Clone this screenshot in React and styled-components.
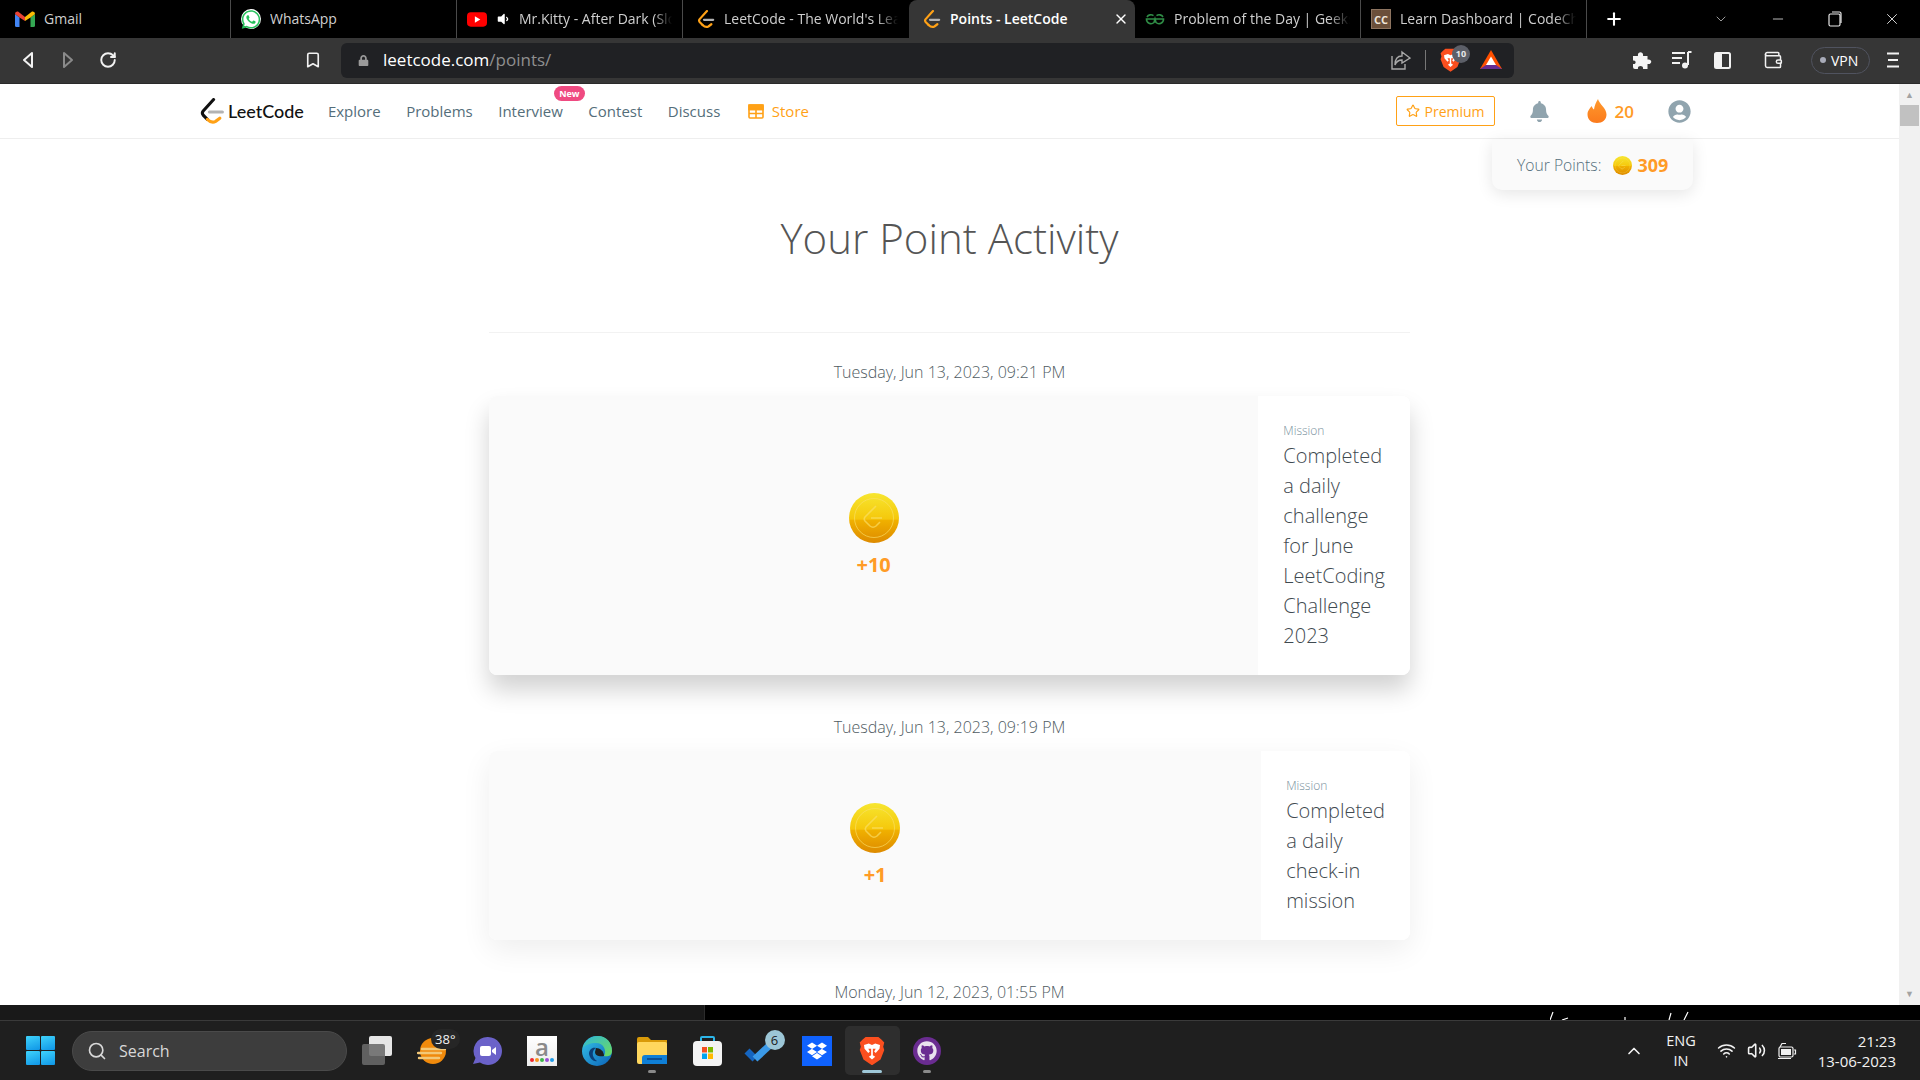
import styled, { createGlobalStyle } from "styled-components";
import {
  Bookmark,
  ChevronDown,
  ChevronUp,
  Minus,
  Plus,
  RotateCw,
  Search,
  Star,
  Volume2,
  Wallet,
  Wifi,
  X,
} from "lucide-react";
import {
  FaBell,
  FaDropbox,
  FaGithub,
  FaLock,
  FaUserCircle,
  FaVolumeDown,
  FaWhatsapp,
} from "react-icons/fa";

const GlobalStyle = createGlobalStyle`
  html, body {
    margin: 0;
    padding: 0;
    background: #000;
    overflow: hidden;
  }
  * {
    box-sizing: border-box;
  }
  body {
    font-family: "Open Sans", "Liberation Sans", sans-serif;
  }
`;

const Screen = styled.div`
  width: 1920px;
  height: 1080px;
  display: flex;
  flex-direction: column;
  overflow: hidden;
`;

/* browser chrome */
const TabStrip = styled.div`
  height: 38px;
  flex: none;
  display: flex;
  padding-left: 5px;
  background: #000;
`;

const Tab = styled.div`
  position: relative;
  width: 226px;
  flex: none;
  display: flex;
  align-items: center;
  gap: 9px;
  padding: 0 ${(p) => (p.$active ? 5 : 10)}px 0 ${(p) => (p.$inset ? 12 : 10)}px;
  background: ${(p) => (p.$active ? "#363636" : "transparent")};
  border-radius: ${(p) => (p.$active ? "8px 8px 0 0" : "0")};
  border-right: 1px solid ${(p) => (p.$active || p.$noLine ? "transparent" : "#4a4a4a")};
  color: ${(p) => (p.$active ? "#fff" : "#cfcfcf")};
  font-size: 14px;
  font-weight: ${(p) => (p.$active ? 600 : 400)};
`;

const TabTitle = styled.span`
  flex: 1;
  min-width: 0;
  margin-bottom: 2px;
  overflow: hidden;
  white-space: nowrap;
  mask-image: ${(p) =>
    p.$fade ? "linear-gradient(to right, #000 88%, transparent)" : "none"};
`;

const FavBox = styled.span`
  width: ${(p) => (p.$narrow ? 14 : 20)}px;
  height: 20px;
  flex: none;
  display: flex;
  align-items: center;
  justify-content: center;
`;

const WhatsBack = styled(FavBox)`
  background: #fff;
  border-radius: 50%;
  color: #25c05a;
  font-size: 21px;
`;

const CodeChefMark = styled(FavBox)`
  background: #6b4f3a;
  color: #f0e6da;
  font-size: 11px;
  font-weight: 700;
  border: 1px solid #8d7460;
`;

const NewTabButton = styled.div`
  width: 54px;
  flex: none;
  display: flex;
  align-items: center;
  justify-content: center;
  color: #fff;
`;

const WindowControls = styled.div`
  margin-left: auto;
  display: flex;
`;

const WindowButton = styled.div`
  width: 57px;
  display: flex;
  align-items: center;
  justify-content: center;
  color: #e8e8e8;
`;

const Toolbar = styled.div`
  height: 46px;
  flex: none;
  display: flex;
  align-items: center;
  padding: 0 0 1px 8px;
  background: #363636;
  border-bottom: 1px solid #2a2a2a;
`;

const ToolButton = styled.div`
  width: 40px;
  height: 34px;
  flex: none;
  display: flex;
  align-items: center;
  justify-content: center;
  margin-left: ${(p) => p.$gap || 0}px;
  color: ${(p) => (p.$dim ? "#8a8a8a" : "#f2f2f2")};
`;

const AddressBar = styled.div`
  width: 1173px;
  height: 35px;
  flex: none;
  margin-left: 8px;
  display: flex;
  align-items: center;
  padding: 0 11px 0 17px;
  background: #202124;
  border-radius: 6px;
  color: #9a9a9a;
  font-size: 17px;
`;

const Url = styled.span`
  margin: 0 0 1px 14px;
  color: #8f8f8f;
  & b {
    color: #fff;
    font-weight: 400;
  }
`;

const AddressEnd = styled.div`
  margin-left: auto;
  display: flex;
  align-items: center;
`;

const BarDivider = styled.span`
  width: 1px;
  height: 20px;
  margin: 0 14px;
  background: #777;
`;

const ShieldWrap = styled.span`
  position: relative;
  display: flex;
  margin-right: 18px;
`;

const ShieldCount = styled.span`
  position: absolute;
  top: -3px;
  right: -9px;
  width: 18px;
  height: 18px;
  border-radius: 50%;
  background: #5c5f68;
  color: #e8e8e8;
  font-size: 9px;
  font-weight: 700;
  display: flex;
  align-items: center;
  justify-content: center;
`;

const VpnPill = styled.div`
  width: 59px;
  height: 27px;
  flex: none;
  margin-left: 18px;
  display: flex;
  align-items: center;
  gap: 5px;
  padding-left: 8px;
  border: 1.5px solid #50535f;
  border-radius: 14px;
  color: #fff;
  font-size: 14px;
`;

const VpnDot = styled.span`
  width: 6px;
  height: 6px;
  border-radius: 50%;
  background: #a8abb8;
`;

/* page */
const PageRow = styled.div`
  flex: 1;
  min-height: 0;
  display: flex;
  background: #fff;
`;

const Scroller = styled.div`
  flex: 1;
  min-width: 0;
  position: relative;
  overflow: hidden;
`;

const Nav = styled.nav`
  height: 55px;
  display: flex;
  align-items: center;
  padding: 0 208px 0 198px;
  border-bottom: 1px solid #eeeeee;
`;

const LogoLink = styled.div`
  display: flex;
  align-items: center;
  gap: 3px;
  margin-right: 24px;
  color: #111;
  font-family: Lato, "Open Sans", sans-serif;
  font-size: 18px;
  font-weight: 500;
`;

const NavLinks = styled.div`
  display: flex;
  align-items: center;
  gap: 25.5px;
`;

const NavLink = styled.div`
  position: relative;
  display: flex;
  align-items: center;
  gap: 8px;
  margin-left: ${(p) => (p.$store ? 2 : 0)}px;
  font-size: 15px;
  color: ${(p) => (p.$store ? "#ffa116" : "#546e7a")};
`;

const NewBadge = styled.span`
  position: absolute;
  top: -15px;
  right: -22px;
  width: 31px;
  height: 15px;
  border-radius: 8px;
  background: #ef4a81;
  color: #fff;
  font-size: 9px;
  font-weight: 700;
  display: flex;
  align-items: center;
  justify-content: center;
`;

const NavRight = styled.div`
  margin-left: auto;
  display: flex;
  align-items: center;
`;

const PremiumButton = styled.div`
  width: 99px;
  height: 30px;
  display: flex;
  align-items: center;
  justify-content: center;
  gap: 5px;
  border: 1px solid #ffa116;
  border-radius: 2px;
  color: #ffa116;
  font-size: 14px;
`;

const NavBell = styled.div`
  display: flex;
  margin-left: 34px;
  color: #90a4ae;
  font-size: 21px;
`;

const Streak = styled.div`
  display: flex;
  align-items: center;
  gap: 8px;
  margin-left: 37px;
  color: #ff9b26;
  font-size: 17px;
  font-weight: 600;
`;

const Avatar = styled.div`
  display: flex;
  margin-left: 34px;
  color: #90a4ae;
  font-size: 23px;
`;

const PointsPopover = styled.div`
  position: absolute;
  top: 55px;
  right: 206px;
  width: 201px;
  height: 51px;
  display: flex;
  align-items: center;
  padding: 1px 0 0 25px;
  background: #fafafa;
  border-radius: 0 0 10px 10px;
  box-shadow: 0 4px 16px rgba(0, 0, 0, 0.1);
  color: #546e7a;
  font-size: 15.7px;
  font-weight: 300;
`;

const PointsValue = styled.span`
  margin-left: 5px;
  color: #ff9b26;
  font-size: 18px;
  font-weight: 700;
`;

const PopCoin = styled.span`
  display: flex;
  margin-left: 12px;
`;

const Main = styled.main`
  width: 921px;
  margin: 0 auto;
`;

const PageTitle = styled.h1`
  margin: 74px 0 69px;
  text-align: center;
  color: #555;
  font-size: 42px;
  line-height: 50px;
  font-weight: 300;
`;

const Rule = styled.div`
  height: 1px;
  background: #f2f2f2;
  margin-bottom: 27px;
`;

const ActivityDate = styled.div`
  height: 24px;
  margin-bottom: 12px;
  text-align: center;
  color: #4f5b62;
  font-size: 16px;
  line-height: 24px;
  font-weight: 300;
`;

const ActivityCard = styled.section`
  display: flex;
  margin-bottom: 40px;
  border-radius: 8px;
  background: #fff;
  box-shadow: ${(p) =>
    p.$raised
      ? "0 15px 25px rgba(0, 0, 0, 0.18)"
      : "0 10px 30px rgba(0, 0, 0, 0.07)"};
`;

const RewardSide = styled.div`
  flex: 1;
  display: flex;
  flex-direction: column;
  align-items: center;
  justify-content: center;
  gap: 8px;
  background: #fafafa;
  border-radius: 8px 0 0 8px;
`;

const RewardAmount = styled.div`
  color: #ff9b26;
  font-size: 20px;
  line-height: 27px;
  font-weight: 700;
`;

const MissionSide = styled.div`
  flex: none;
  width: min-content;
  padding: 25px 25px 24px;
  background: #fff;
  border-radius: 0 8px 8px 0;
`;

const MissionLabel = styled.div`
  color: #78909c;
  font-size: 12px;
  line-height: 20px;
  font-weight: 300;
`;

const MissionText = styled.div`
  color: #3f4a50;
  font-size: 20px;
  line-height: 30px;
  font-weight: 300;
`;

const Scrollbar = styled.div`
  width: 21px;
  flex: none;
  display: flex;
  flex-direction: column;
  align-items: center;
  padding: 0 0 1px;
  background: #f1f1f1;
  color: #a3a3a3;
  font-size: 9px;
`;

const ScrollArrow = styled.div`
  height: 21px;
  flex: none;
  display: flex;
  align-items: center;
  justify-content: center;
  margin-top: ${(p) => (p.$end ? "auto" : "0")};
`;

const ScrollThumb = styled.div`
  width: 19px;
  height: 21px;
  background: #c1c1c1;
`;

/* what shows of the window behind, above the taskbar */
const BehindStrip = styled.div`
  height: 15px;
  flex: none;
  display: flex;
  background: #000;
`;

const BehindPanel = styled.div`
  width: 705px;
  background: #191919;
  border-right: 1px solid #2c2c2c;
`;

const BehindMarks = styled.div`
  margin-left: 845px;
  display: flex;
`;

const Taskbar = styled.footer`
  height: 60px;
  flex: none;
  display: flex;
  align-items: center;
  padding-left: 26px;
  background: #1f1f1f;
  border-top: 1px solid #3a3a3a;
`;

const StartLogo = styled.div`
  width: 29px;
  height: 29px;
  flex: none;
  display: grid;
  grid-template-columns: 1fr 1fr;
  gap: 1.5px;
`;

const StartPane = styled.span`
  background: linear-gradient(160deg, #3fd3fb, #0f95e6);
  border-radius: 1px;
`;

const SearchPill = styled.div`
  width: 275px;
  height: 40px;
  flex: none;
  margin: 0 2.5px 0 17px;
  display: flex;
  align-items: center;
  gap: 12px;
  padding-left: 14px;
  background: #3d3d3d;
  border: 1px solid #4a4a4a;
  border-radius: 20px;
  color: #d8d8d8;
  font-size: 16px;
`;

const TaskItem = styled.div`
  position: relative;
  width: 55px;
  height: 49px;
  flex: none;
  display: flex;
  align-items: center;
  justify-content: center;
  background: ${(p) => (p.$active ? "#2e2e2e" : "transparent")};
  border-radius: 5px;
`;

const RunDot = styled.span`
  position: absolute;
  bottom: 2px;
  left: 50%;
  transform: translateX(-50%);
  width: ${(p) => (p.$wide ? "20px" : "8px")};
  height: 3px;
  border-radius: 2px;
  background: ${(p) => (p.$wide ? "#9fc8d8" : "#8a8a8a")};
`;

const TempBadge = styled.span`
  position: absolute;
  top: 3px;
  right: 0;
  height: 20px;
  padding: 0 4px;
  border-radius: 10px;
  background: #262626;
  color: #f2f2f2;
  font-size: 13px;
  line-height: 20px;
`;

const TodoBadge = styled.span`
  position: absolute;
  top: 4px;
  right: 5px;
  width: 20px;
  height: 20px;
  border-radius: 50%;
  background: #9cc6d6;
  color: #1a1a1a;
  font-size: 13px;
  display: flex;
  align-items: center;
  justify-content: center;
`;

const AmazonTile = styled.div`
  width: 30px;
  height: 30px;
  display: flex;
  flex-direction: column;
  align-items: center;
  background: linear-gradient(#fff, #ececec);
  color: #8a8a8a;
  font-size: 24px;
  line-height: 21px;
  font-weight: 600;
`;

const AmazonDots = styled.div`
  display: flex;
  gap: 1px;
  margin-top: 1px;
`;

const AmazonDot = styled.span`
  width: 4px;
  height: 4px;
  border-radius: 50%;
  background: ${(p) => p.$color};
`;

const DropboxTile = styled.div`
  width: 30px;
  height: 30px;
  display: flex;
  align-items: center;
  justify-content: center;
  background: #0f62fe;
  color: #fff;
  font-size: 20px;
`;

const GithubBadge = styled.div`
  width: 28px;
  height: 28px;
  display: flex;
  align-items: center;
  justify-content: center;
  border-radius: 50%;
  background: #6a2c91;
  color: #e9e2ee;
  font-size: 20px;
`;

const Tray = styled.div`
  margin-left: auto;
  display: flex;
  align-items: center;
  padding-right: 24px;
  color: #f2f2f2;
  font-size: 14px;
`;

const TrayStack = styled.div`
  display: flex;
  flex-direction: column;
  align-items: ${(p) => (p.$end ? "flex-end" : "center")};
  margin: 0 ${(p) => p.$right || 0}px 0 ${(p) => p.$left || 0}px;
  font-size: ${(p) => (p.$end ? 15 : 14.5)}px;
  line-height: 20px;
`;

const TrayIcon = styled.div`
  width: 30px;
  display: flex;
  justify-content: center;
`;

const Gradients = () => (
  <svg width="0" height="0" style={{ position: "absolute" }}>
    <defs>
      <linearGradient id="coinFace" x1="0" y1="0" x2="0" y2="1">
        <stop offset="0" stopColor="#f7e62f" />
        <stop offset="0.52" stopColor="#f5c80c" />
        <stop offset="0.55" stopColor="#f0b000" />
        <stop offset="1" stopColor="#dd8a00" />
      </linearGradient>
      <linearGradient id="flame" x1="0" y1="0" x2="0" y2="1">
        <stop offset="0" stopColor="#ff9a2e" />
        <stop offset="1" stopColor="#fb7a1c" />
      </linearGradient>
      <linearGradient id="edgeBlue" x1="0" y1="0" x2="1" y2="1">
        <stop offset="0" stopColor="#36c5e8" />
        <stop offset="1" stopColor="#0b62b8" />
      </linearGradient>
      <linearGradient id="edgeGreen" x1="0" y1="0" x2="1" y2="1">
        <stop offset="0" stopColor="#2fb8d8" />
        <stop offset="1" stopColor="#6fdc5c" />
      </linearGradient>
    </defs>
  </svg>
);

const Coin = ({ size = 50 }) => (
  <svg width={size} height={size} viewBox="0 0 50 50">
    <circle cx="25" cy="25" r="25" fill="url(#coinFace)" />
    <circle cx="25" cy="25" r="19.5" fill="none" stroke="#fbe06a" strokeOpacity=".7" strokeWidth=".9" />
    <path
      d="M27 13 L16 24 Q14.5 26 16 28 L21 33 Q24 35.5 27 33 L31 29"
      fill="none"
      stroke="#fbe06a"
      strokeOpacity=".65"
      strokeWidth="1.6"
    />
    <path d="M22 25 H33" stroke="#fbe06a" strokeOpacity=".65" strokeWidth="1.6" />
  </svg>
);

const LeetLogo = ({ size = 24, ink = "#111" }) => (
  <svg width={size} height={size} viewBox="0 0 24 26" fill="none" strokeWidth="3" strokeLinecap="round">
    <path d="M14 1.5 L4 12.5 Q2.4 14.5 4 16.5 L8 20.5" stroke={ink} />
    <path d="M8 20.5 Q12 24.5 16 22.5 L20 19.5" stroke="#ffa116" />
    <path d="M10 13.5 H22.5" stroke="#b3b3b3" />
  </svg>
);

const GmailIcon = () => (
  <svg width="20" height="16" viewBox="0 0 20 16">
    <path d="M0 3 V14.5 Q0 16 1.5 16 H4.5 V6.5 Z" fill="#4285f4" />
    <path d="M15.5 6.5 V16 H18.5 Q20 16 20 14.5 V3 Z" fill="#34a853" />
    <path d="M0 3 Q0 0 3 .6 L10 6 L10 10 L4.5 6.5 L0 3Z" fill="#ea4335" />
    <path d="M20 3 Q20 0 17 .6 L10 6 L10 10 L15.5 6.5 Z" fill="#fbbc04" />
  </svg>
);

const YoutubeIcon = () => (
  <svg width="21" height="15" viewBox="0 0 21 15">
    <rect width="21" height="15" rx="4" fill="#ff0000" />
    <path d="M8.3 4 L14 7.5 L8.3 11 Z" fill="#fff" />
  </svg>
);

const GfgIcon = () => (
  <svg width="20" height="12" viewBox="0 0 20 12" fill="none" stroke="#2f8d46" strokeWidth="1.6">
    <path d="M10 6 H1.5 A4.5 4.5 0 0 0 9 9.5 L10 6 L11 9.5 A4.5 4.5 0 0 0 18.5 6 H10" />
    <path d="M8.5 2.6 A4.5 4.5 0 0 0 2 4" />
    <path d="M11.5 2.6 A4.5 4.5 0 0 1 18 4" />
  </svg>
);

const BackArrow = ({ flip }) => (
  <svg width="12" height="18" viewBox="0 0 12 18" fill="none" stroke="currentColor" strokeWidth="2" strokeLinejoin="round">
    <path d={flip ? "M2 2 L10 9 L2 16 Z" : "M10 2 L2 9 L10 16 Z"} />
  </svg>
);

const ShareIcon = () => (
  <svg width="20" height="20" viewBox="0 0 20 20" fill="none" stroke="#a9a9a9" strokeWidth="1.4">
    <path d="M1 6 V19 H14 V14" />
    <path d="M11 2 L19 8 L11 13 V10 Q6 10 4 15 Q4 6 11 6 Z" />
  </svg>
);

const BraveIcon = ({ size = 22 }) => (
  <svg width={size} height={size * 1.15} viewBox="0 0 24 28">
    <path d="M6 1 H18 L21 3.5 L23.5 6 L22.5 10 L23.5 13 L20 22 L12 27.5 L4 22 L.5 13 L1.5 10 L.5 6 L3 3.5 Z" fill="#fb4f1f" />
    <path
      d="M4.5 8.5 L9 7 L12 8.5 L15 7 L19.5 8.5 L19 12 L15.5 16 L14 14.5 L15.5 12 L12.8 12 L12.8 18 L15 19.5 L12 22 L9 19.5 L11.2 18 L11.2 12 L8.5 12 L10 14.5 L8.5 16 L5 12 Z"
      fill="#fff"
    />
  </svg>
);

const BatIcon = () => (
  <svg width="24" height="21" viewBox="0 0 24 21">
    <path d="M12 1 L23 20 H1 Z" fill="#ff5000" />
    <path d="M12 7.5 L17 16 H7 Z" fill="#fff" />
    <path d="M1 20 L7 16 H17 L23 20 Z" fill="#662d91" />
  </svg>
);

const PuzzleIcon = () => (
  <svg width="20" height="20" viewBox="0 0 20 20" fill="#f5f5f5">
    <path d="M1 6 H6 C5 1 12 1 11 6 H15.5 V9.5 C20.5 8.5 20.5 15 15.5 14 V19 H11 C12 15 5 15 6 19 H3 Q1 19 1 17 V14 C4.5 15 4.5 9.5 1 10.5 Z" />
  </svg>
);

const PlaylistIcon = () => (
  <svg width="20" height="18" viewBox="0 0 20 18" fill="#f2f2f2" stroke="#f2f2f2">
    <path d="M0 2 H13 M0 7 H10 M0 12 H8" strokeWidth="2" />
    <path d="M16 1 H19.5 M16 1 V14" strokeWidth="2" fill="none" />
    <circle cx="13" cy="14.5" r="3" stroke="none" />
  </svg>
);

const SidebarIcon = () => (
  <svg width="17" height="17" viewBox="0 0 17 17">
    <rect x="1" y="1" width="15" height="15" rx="1.5" fill="none" stroke="#f2f2f2" strokeWidth="2" />
    <rect x="1" y="1" width="7" height="15" fill="#f2f2f2" />
  </svg>
);

const MenuLines = () => (
  <svg width="14" height="16" viewBox="0 0 14 16" stroke="#f2f2f2" strokeWidth="2">
    <path d="M1 1.5 H13 M2 8 H12 M1 14.5 H13" />
  </svg>
);

const RestoreIcon = () => (
  <svg width="14" height="16" viewBox="0 0 14 16" fill="none" stroke="#e8e8e8" strokeWidth="1.2">
    <rect x="1" y="3" width="11" height="12" rx="1.5" />
    <path d="M4 1 H11.5 Q13 1 13 2.5 V12" />
  </svg>
);

const StoreIcon = () => (
  <svg width="16" height="15" viewBox="0 0 16 15" fill="none" stroke="#ffa116" strokeWidth="1.6">
    <rect x="1" y="1" width="14" height="13" rx="1" />
    <path d="M1 5.5 H15 M1 9.5 H15 M8 5.5 V14" />
    <path d="M1 1 H15 V5.5 H1 Z" fill="#ffa116" />
  </svg>
);

const FlameIcon = () => (
  <svg width="20" height="24" viewBox="0 0 20 24">
    <path
      d="M11 0 C12 5 19.5 9 19.5 15.5 C19.5 20.5 15.5 24 10 24 C4.5 24 .5 20.5 .5 15.5 C.5 11.5 3 9.5 4.5 7 C5.5 9 6 10 7 10.5 C7.5 7 9 3 11 0 Z"
      fill="url(#flame)"
    />
  </svg>
);

const TaskViewIcon = () => (
  <svg width="30" height="29" viewBox="0 0 30 29">
    <rect x="7" y="0" width="23" height="20" rx="2" fill="#e6e6e6" />
    <rect x="0" y="8" width="23" height="21" rx="2" fill="#6a6a6a" fillOpacity=".88" />
  </svg>
);

const WeatherIcon = () => (
  <svg width="30" height="28" viewBox="0 0 30 28">
    <circle cx="16" cy="14" r="13" fill="#f08a0c" />
    <path d="M5 12 H28 M1 16 H24 M2 21 H22" stroke="#f3c877" strokeWidth="2.4" strokeLinecap="round" />
  </svg>
);

const ChatIcon = () => (
  <svg width="30" height="30" viewBox="0 0 30 30">
    <path d="M16 1 A14 14 0 1 1 8 26.5 L1 28 L3.5 22 A14 14 0 0 1 16 1 Z" fill="#6b62c9" />
    <rect x="8" y="10" width="11" height="10" rx="2" fill="#fff" />
    <path d="M20 14 L24 11 V19 L20 16 Z" fill="#fff" />
  </svg>
);

const EdgeIcon = () => (
  <svg width="30" height="30" viewBox="0 0 30 30">
    <circle cx="15" cy="15" r="15" fill="url(#edgeBlue)" />
    <path d="M1 12 C3 3 11 0 16 0 C25 0 30 7 30 15 C30 20 25 21 22 20 C25 15 22 7 14 7 C8 7 3 9 1 12 Z" fill="url(#edgeGreen)" />
    <path d="M14 12 C10 14 9 21 15 25 C12 26 8 23 7 18 C7 14 10 11 14 12 Z" fill="#0a3f7a" />
    <path d="M14 12 C18 12 22 15 22 20 C18 21 13 20 13 16 Z" fill="#1f1f1f" />
  </svg>
);

const FolderIcon = () => (
  <svg width="30" height="27" viewBox="0 0 30 27">
    <path d="M0 2 Q0 0 2 0 H11 L14 3 H30 V9 H0 Z" fill="#d99a09" />
    <rect y="5" width="30" height="22" rx="2" fill="#ffd75e" />
    <path d="M5 27 V21 Q5 18 8 18 H30 V27 Z" fill="#0f7fd6" />
    <path d="M10 22 H25" stroke="#0a4f94" strokeWidth="2" />
  </svg>
);

const MsStoreIcon = () => (
  <svg width="29" height="30" viewBox="0 0 29 30">
    <path d="M8 6 V2 Q8 1 9 1 H20 Q21 1 21 2 V6" fill="none" stroke="#2cb5e8" strokeWidth="2" />
    <rect y="5" width="29" height="25" rx="4" fill="#f3f3f3" />
    <rect x="9" y="11" width="5" height="5.5" fill="#f25022" />
    <rect x="15" y="11" width="5" height="5.5" fill="#7fba00" />
    <rect x="9" y="17.5" width="5" height="5.5" fill="#00a4ef" />
    <rect x="15" y="17.5" width="5" height="5.5" fill="#ffb900" />
  </svg>
);

const TodoIcon = () => (
  <svg width="36" height="30" viewBox="0 0 36 30" fill="none" strokeWidth="7">
    <path d="M3 15 L11 23" stroke="#1565c0" />
    <path d="M11 23 L26 9" stroke="#3b9ae8" />
  </svg>
);

const BatteryIcon = () => (
  <svg width="20" height="18" viewBox="0 0 20 18" fill="none" stroke="#f2f2f2" strokeWidth="1.2">
    <rect x="2" y="5" width="14" height="10" rx="1.5" />
    <rect x="4" y="7" width="10" height="6" fill="#f2f2f2" stroke="none" />
    <path d="M17 8 H18.5 V12 H17" />
    <path d="M3 5 L5 1.5 H9 M1 16.5 H14" />
  </svg>
);

const BehindScribble = () => (
  <svg width="150" height="15" viewBox="0 0 150 15" fill="none" stroke="#fff" strokeWidth="1.2">
    <path d="M0 15 L3 7 M75 15 V12 M119 15 L121 8 M134 15 L138 7 M12 15 L18 13" />
  </svg>
);

const activities = [
  {
    date: "Tuesday, Jun 13, 2023, 09:21 PM",
    amount: "+10",
    text: "Completed a daily challenge for June LeetCoding Challenge 2023",
    raised: true,
  },
  {
    date: "Tuesday, Jun 13, 2023, 09:19 PM",
    amount: "+1",
    text: "Completed a daily check-in mission",
  },
];

const App = () => {
  return (
    <Screen>
      <GlobalStyle />
      <Gradients />

      <TabStrip>
        <Tab>
          <FavBox><GmailIcon /></FavBox>
          <TabTitle>Gmail</TabTitle>
        </Tab>
        <Tab>
          <WhatsBack><FaWhatsapp /></WhatsBack>
          <TabTitle>WhatsApp</TabTitle>
        </Tab>
        <Tab>
          <FavBox><YoutubeIcon /></FavBox>
          <FavBox $narrow><FaVolumeDown size={14} color="#fff" /></FavBox>
          <TabTitle $fade>Mr.Kitty - After Dark (Slowed)</TabTitle>
        </Tab>
        <Tab $noLine $inset>
          <FavBox><LeetLogo size={19} ink="#ffa116" /></FavBox>
          <TabTitle $fade>LeetCode - The World's Leading</TabTitle>
        </Tab>
        <Tab $active $inset>
          <FavBox><LeetLogo size={19} ink="#ffa116" /></FavBox>
          <TabTitle>Points - LeetCode</TabTitle>
          <X size={16} color="#fff" />
        </Tab>
        <Tab>
          <FavBox><GfgIcon /></FavBox>
          <TabTitle $fade>Problem of the Day | GeeksforGeeks</TabTitle>
        </Tab>
        <Tab>
          <CodeChefMark>CC</CodeChefMark>
          <TabTitle $fade>Learn Dashboard | CodeChef</TabTitle>
        </Tab>
        <NewTabButton><Plus size={20} strokeWidth={2.5} /></NewTabButton>
        <WindowControls>
          <WindowButton><ChevronDown size={16} strokeWidth={1} /></WindowButton>
          <WindowButton><Minus size={16} strokeWidth={1.2} /></WindowButton>
          <WindowButton><RestoreIcon /></WindowButton>
          <WindowButton><X size={18} strokeWidth={1.2} /></WindowButton>
        </WindowControls>
      </TabStrip>

      <Toolbar>
        <ToolButton><BackArrow /></ToolButton>
        <ToolButton $dim><BackArrow flip /></ToolButton>
        <ToolButton><RotateCw size={18} strokeWidth={2.6} /></ToolButton>
        <ToolButton $gap={165}><Bookmark size={18} strokeWidth={2.2} /></ToolButton>
        <AddressBar>
          <FaLock size={11} />
          <Url><b>leetcode.com</b>/points/</Url>
          <AddressEnd>
            <ShareIcon />
            <BarDivider />
            <ShieldWrap>
              <BraveIcon size={21} />
              <ShieldCount>10</ShieldCount>
            </ShieldWrap>
            <BatIcon />
          </AddressEnd>
        </AddressBar>
        <ToolButton $gap={108}><PuzzleIcon /></ToolButton>
        <ToolButton><PlaylistIcon /></ToolButton>
        <ToolButton><SidebarIcon /></ToolButton>
        <ToolButton $gap={11}><Wallet size={20} strokeWidth={1.8} /></ToolButton>
        <VpnPill><VpnDot />VPN</VpnPill>
        <ToolButton $gap={3}><MenuLines /></ToolButton>
      </Toolbar>

      <PageRow>
        <Scroller>
          <Nav>
            <LogoLink>
              <LeetLogo size={27} />
              LeetCode
            </LogoLink>
            <NavLinks>
              <NavLink>Explore</NavLink>
              <NavLink>Problems</NavLink>
              <NavLink>
                Interview
                <NewBadge>New</NewBadge>
              </NavLink>
              <NavLink>Contest</NavLink>
              <NavLink>Discuss</NavLink>
              <NavLink $store><StoreIcon />Store</NavLink>
            </NavLinks>
            <NavRight>
              <PremiumButton>
                <Star size={14} />
                Premium
              </PremiumButton>
              <NavBell><FaBell /></NavBell>
              <Streak><FlameIcon />20</Streak>
              <Avatar><FaUserCircle /></Avatar>
            </NavRight>
          </Nav>

          <PointsPopover>
            Your Points:
            <PopCoin><Coin size={19} /></PopCoin>
            <PointsValue>309</PointsValue>
          </PointsPopover>

          <Main>
            <PageTitle>Your Point Activity</PageTitle>
            <Rule />
            {activities.map((item) => (
              <div key={item.date}>
                <ActivityDate>{item.date}</ActivityDate>
                <ActivityCard $raised={item.raised}>
                  <RewardSide>
                    <Coin />
                    <RewardAmount>{item.amount}</RewardAmount>
                  </RewardSide>
                  <MissionSide>
                    <MissionLabel>Mission</MissionLabel>
                    <MissionText>{item.text}</MissionText>
                  </MissionSide>
                </ActivityCard>
              </div>
            ))}
            <ActivityDate>Monday, Jun 12, 2023, 01:55 PM</ActivityDate>
          </Main>
        </Scroller>
        <Scrollbar>
          <ScrollArrow>▲</ScrollArrow>
          <ScrollThumb />
          <ScrollArrow $end>▼</ScrollArrow>
        </Scrollbar>
      </PageRow>

      <BehindStrip>
        <BehindPanel />
        <BehindMarks><BehindScribble /></BehindMarks>
      </BehindStrip>

      <Taskbar>
        <StartLogo>
          <StartPane />
          <StartPane />
          <StartPane />
          <StartPane />
        </StartLogo>
        <SearchPill>
          <Search size={20} />
          Search
        </SearchPill>
        <TaskItem><TaskViewIcon /></TaskItem>
        <TaskItem><WeatherIcon /><TempBadge>38°</TempBadge></TaskItem>
        <TaskItem><ChatIcon /></TaskItem>
        <TaskItem>
          <AmazonTile>
            a
            <AmazonDots>
              {["#f0282d", "#f7941d", "#3cb54a", "#9b4dd6", "#1e9be8"].map((c) => (
                <AmazonDot key={c} $color={c} />
              ))}
            </AmazonDots>
          </AmazonTile>
        </TaskItem>
        <TaskItem><EdgeIcon /></TaskItem>
        <TaskItem><FolderIcon /><RunDot /></TaskItem>
        <TaskItem><MsStoreIcon /></TaskItem>
        <TaskItem><TodoIcon /><TodoBadge>6</TodoBadge></TaskItem>
        <TaskItem><DropboxTile><FaDropbox /></DropboxTile></TaskItem>
        <TaskItem $active><BraveIcon size={26} /><RunDot $wide /></TaskItem>
        <TaskItem><GithubBadge><FaGithub /></GithubBadge><RunDot /></TaskItem>
        <Tray>
          <ChevronUp size={20} strokeWidth={2} />
          <TrayStack $left={22} $right={16}>
            <span>ENG</span>
            <span>IN</span>
          </TrayStack>
          <TrayIcon><Wifi size={19} /></TrayIcon>
          <TrayIcon><Volume2 size={19} /></TrayIcon>
          <TrayIcon><BatteryIcon /></TrayIcon>
          <TrayStack $end $left={16}>
            <span>21:23</span>
            <span>13-06-2023</span>
          </TrayStack>
        </Tray>
      </Taskbar>
    </Screen>
  );
};

export default App;
